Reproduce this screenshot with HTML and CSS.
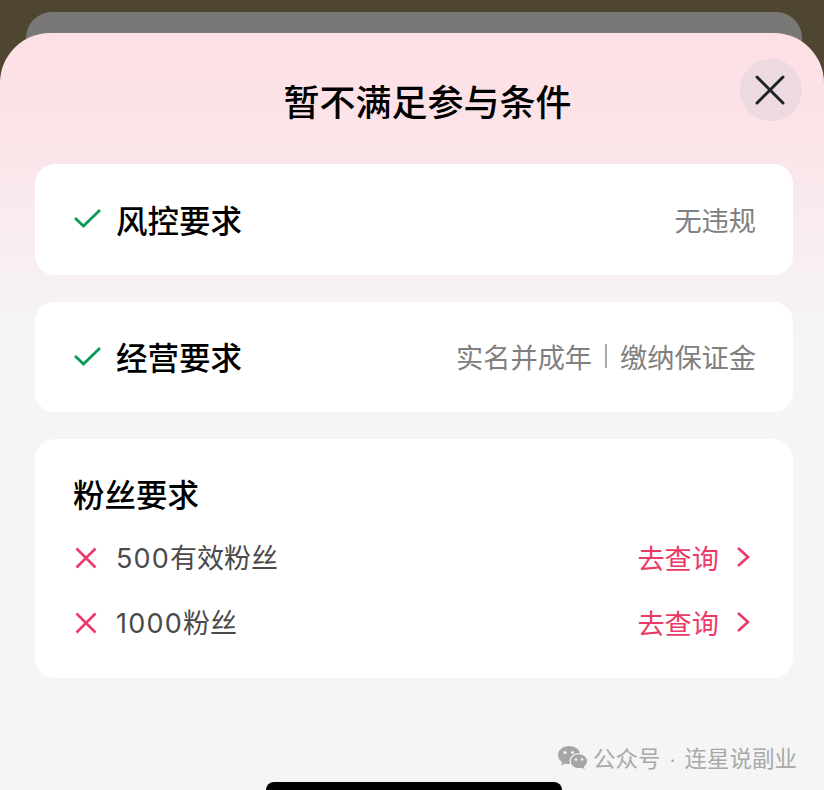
FILE: index.html
```html
<!DOCTYPE html>
<html lang="zh-CN">

<head>
  <meta charset="UTF-8">
  <meta name="viewport" content="width=device-width, initial-scale=1.0">
  <title>暂不满足参与条件</title>
  <link rel="stylesheet" href="styles.css">
</head>

<body>
  <div class="back-card"></div>
  <div class="sheet">
    <div class="sheet-head">
      <h1 class="title">暂不满足参与条件</h1>
      <span class="close">
        <svg width="30" height="30" viewBox="0 0 30 30"><path d="M2 2L28 28M28 2L2 28" fill="none" stroke="#1f2129" stroke-width="3" stroke-linecap="round"/></svg>
      </span>
    </div>

    <div class="card row-card">
      <svg class="check" width="30" height="20" viewBox="0 0 30 20"><path d="M2 10L10.500 18L27 2" fill="none" stroke="#0d9a58" stroke-width="2.800"/></svg>
      <span class="label">风控要求</span>
      <span class="desc">无违规</span>
    </div>

    <div class="card row-card">
      <svg class="check" width="30" height="20" viewBox="0 0 30 20"><path d="M2 10L10.500 18L27 2" fill="none" stroke="#0d9a58" stroke-width="2.800"/></svg>
      <span class="label">经营要求</span>
      <span class="desc">实名并成年<i class="sep"></i>缴纳保证金</span>
    </div>

    <div class="card fans-card">
      <div class="label">粉丝要求</div>
      <div class="fans-row">
        <svg class="cross" width="22" height="22" viewBox="0 0 22 22"><path d="M1.500 1.500L20.500 20.500M20.500 1.500L1.500 20.500" fill="none" stroke="#eb3a66" stroke-width="2.600"/></svg>
        <span class="fans-name"><span class="num">500</span>有效粉丝</span>
        <a class="link">去查询<svg width="14" height="22" viewBox="0 0 14 22"><path d="M2 2L12 11L2 20" fill="none" stroke="#eb3a66" stroke-width="2.600"/></svg></a>
      </div>
      <div class="fans-row">
        <svg class="cross" width="22" height="22" viewBox="0 0 22 22"><path d="M1.500 1.500L20.500 20.500M20.500 1.500L1.500 20.500" fill="none" stroke="#eb3a66" stroke-width="2.600"/></svg>
        <span class="fans-name"><span class="num">1000</span>粉丝</span>
        <a class="link">去查询<svg width="14" height="22" viewBox="0 0 14 22"><path d="M2 2L12 11L2 20" fill="none" stroke="#eb3a66" stroke-width="2.600"/></svg></a>
      </div>
    </div>
  </div>

  <div class="mark">
    <svg width="31" height="28" viewBox="0 0 31 28">
      <path d="M12 1C5.900 1 1 5 1 10C1 12.900 2.600 15.400 5.100 17.100L4 20.500L8 18.500C9.300 18.900 10.600 19.100 12 19.100L13 19C12.700 18.100 12.500 17.200 12.500 16.300C12.500 11.700 16.900 8 22.400 8L23 8C21.900 4 17.400 1 12 1Z" fill="#a6a6a6"/>
      <path d="M30 16.200C30 12.200 26.200 9.300 21.900 9.300C17.300 9.300 13.800 12.500 13.800 16.200C13.800 20 17.300 23.100 21.900 23.100C22.900 23.100 23.800 22.900 24.700 22.700L27.700 24.300L26.900 21.600C28.800 20.200 30 18.300 30 16.200Z" fill="#a6a6a6"/>
      <circle cx="8" cy="7.500" r="1.600" fill="#f5f5f5"/>
      <circle cx="15.500" cy="7.500" r="1.600" fill="#f5f5f5"/>
      <circle cx="19" cy="14.500" r="1.300" fill="#f5f5f5"/>
      <circle cx="25" cy="14.500" r="1.300" fill="#f5f5f5"/>
    </svg>
    <span>公众号<b class="dot">·</b>连星说副业</span>
  </div>
  <div class="home-bar"></div>
</body>

</html>
```

FILE: styles.css
```css
* {
  margin: 0;
  padding: 0;
  box-sizing: border-box;
}

html {
  background-color: #4f4631;
}

body {
  position: relative;
  height: 790px;
  overflow: hidden;
  font-family: "Noto Sans CJK SC", "Noto Sans", sans-serif;
}

.back-card {
  height: 60px;
  margin: 12px 22px -39px 26px;
  background-color: #7a7876;
  border-radius: 26px 26px 0 0;
}

.sheet {
  position: relative;
  height: 757px;
  padding: 26px 31px 0 35px;
  background: linear-gradient(#fde0e6 0, #fce2e7 70px, #f5f5f5 310px);
  border-radius: 50px 50px 0 0;
}

.sheet-head {
  display: flex;
  justify-content: center;
  align-items: center;
  height: 62px;
  margin-right: -4px;
  margin-bottom: 43px;
  padding-left: 23px;
  position: relative;
}

.title {
  font-size: 36px;
  line-height: 62px;
  font-weight: 500;
  color: #000;
  padding-top: 20px;
}

.close {
  position: absolute;
  top: 0;
  right: -5px;
  width: 62px;
  height: 62px;
  display: flex;
  align-items: center;
  justify-content: center;
  border-radius: 50%;
  background-color: #ecdae0;
}

.close svg {
  margin-right: 2px;
}

.card {
  width: 758px;
  background-color: #fff;
  border-radius: 20px;
  margin-bottom: 27px;
}

.row-card {
  display: flex;
  align-items: center;
  height: 111px;
  padding: 0 37px 0 38px;
}

.row-card + .row-card {
  height: 110px;
}

.check {
  margin-right: 13px;
  margin-top: -3px;
}

.label {
  font-size: 31.500px;
  line-height: 44px;
  font-weight: 500;
  color: #000;
}

.row-card .label {
  margin-top: -2px;
}

.desc {
  margin-left: auto;
  margin-top: -2px;
  display: flex;
  align-items: center;
  font-size: 27.200px;
  color: #808080;
}

.sep {
  width: 2px;
  height: 24px;
  margin: 0 13px;
  background-color: #aaa;
}

.fans-card {
  height: 239px;
  padding: 32px 37px 0 38px;
}

.fans-row {
  display: flex;
  align-items: center;
  height: 65px;
}

.fans-row:nth-of-type(2) {
  margin-top: 9px;
}

.cross {
  margin-right: 19px;
  margin-left: 2px;
  margin-top: 2px;
}

.fans-name {
  font-family: Inter, "Noto Sans CJK SC", sans-serif;
  font-size: 27px;
  color: #4a4a4a;
}

.num {
  letter-spacing: 1.200px;
}

.link {
  margin-left: auto;
  display: flex;
  align-items: center;
  gap: 17px;
  font-size: 27.200px;
  color: #eb3a66;
}

.link svg {
  margin-right: 6px;
}

.mark {
  position: absolute;
  top: 742px;
  left: 557px;
  display: flex;
  align-items: center;
  gap: 5px;
  color: #a9a9a9;
  font-size: 22.500px;
  line-height: 30px;
}

.dot {
  display: inline-block;
  width: 24px;
  text-align: center;
  font-weight: 400;
  font-family: "Liberation Sans", sans-serif;
}

.home-bar {
  position: absolute;
  left: 266px;
  bottom: -8px;
  width: 296px;
  height: 16px;
  border-radius: 8px;
  background-color: #000;
}
```
